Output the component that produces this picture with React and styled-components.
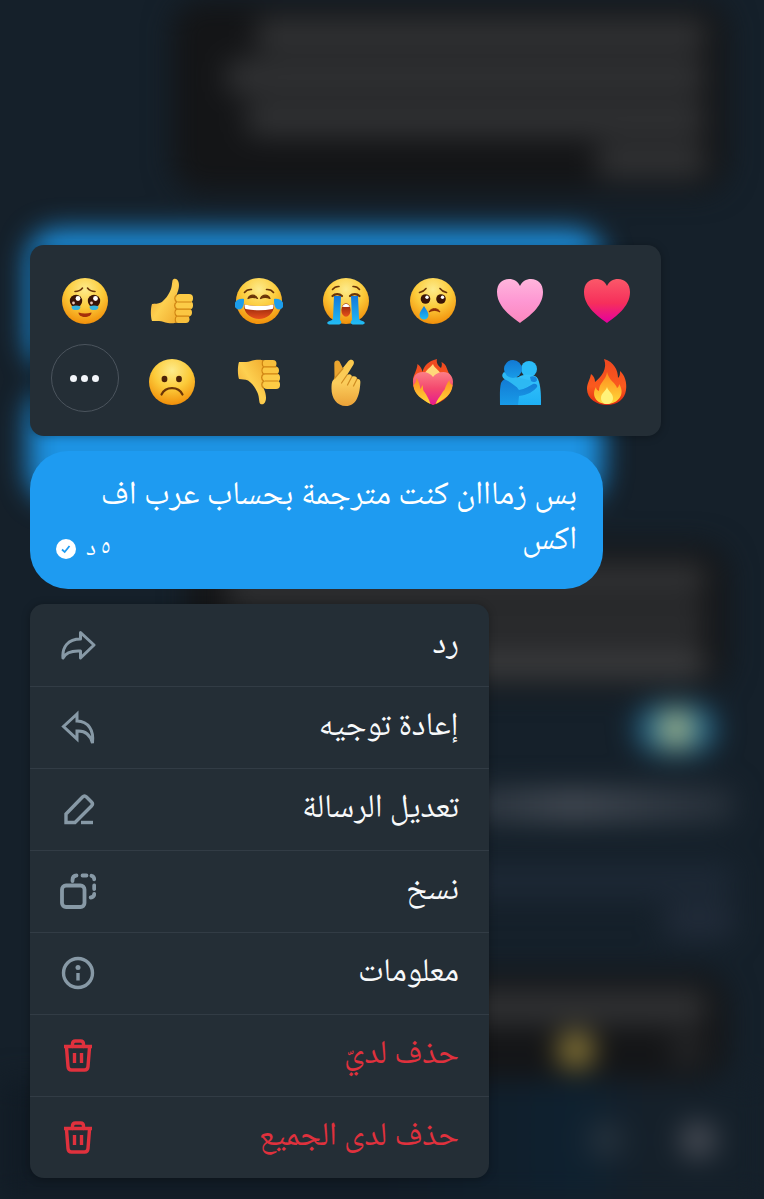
import React from 'react';
import styled, { createGlobalStyle, css } from 'styled-components';

const GlobalStyle = createGlobalStyle`
  * {
    box-sizing: border-box;
  }
  body {
    margin: 0;
    background: #15202a;
    font-family: "Noto Naskh Arabic UI", "Noto Naskh Arabic", "Noto Sans Arabic", "Noto Sans", "DejaVu Sans", sans-serif;
  }
  button {
    margin: 0;
    padding: 0;
    border: none;
    background: none;
    color: inherit;
    font: inherit;
    cursor: pointer;
  }
`;

const Screen = styled.main`
  position: relative;
  display: flex;
  flex-direction: column;
  align-items: flex-end;
  gap: 15px;
  min-height: 100vh;
  padding: 245px 103px 20px 30px;
  overflow: hidden;
`;

/* blurred conversation behind the overlay */
const Backdrop = styled.div`
  position: absolute;
  inset: 0;
  display: flex;
  flex-direction: column;
  align-items: flex-start;
  filter: blur(14px);
  pointer-events: none;
`;

const GhostBubble = styled.div`
  display: flex;
  flex-direction: column;
  gap: 8px;
  flex: none;
  width: ${(p) => p.$width}px;
  height: ${(p) => p.$height}px;
  margin: ${(p) => p.$top || 0}px 36px 0;
  padding: 18px 22px;
  border-radius: 30px;
  background: #141517;
  ${(p) => p.$own && css`
    align-self: flex-end;
    margin-left: 28px;
    background: #1d93e3;
  `}
`;

const GhostLine = styled.div`
  flex: none;
  width: ${(p) => p.$width}px;
  height: 34px;
  margin: ${(p) => p.$top || 0}px ${(p) => p.$side || 0}px 0;
  border-radius: 10px;
  background: ${(p) => p.$color || '#313234'};
`;

const GhostReaction = styled.div`
  display: flex;
  flex: none;
  align-items: center;
  justify-content: center;
  width: 80px;
  height: 50px;
  margin: 14px 48px 0;
  border-radius: 25px;
  background: #24688c;
`;

const GhostDot = styled.div`
  width: 36px;
  height: 36px;
  border-radius: 50%;
  background: ${(p) => p.$color};
`;

const GhostRow = styled.div`
  display: flex;
  gap: ${(p) => p.$gap}px;
`;

const GhostComposer = styled.div`
  display: flex;
  flex: 1;
  align-items: center;
  align-self: stretch;
  gap: 56px;
  padding: 0 48px;
  background: linear-gradient(to left, #15202a 16%, #0f2130 24%, #111b25 50%);
`;

const panel = css`
  position: relative;
  width: 100%;
  border-radius: 14px;
  background: #242e36;
  box-shadow: 0 1px 8px rgba(0, 0, 0, 0.3);
`;

const Reactions = styled.div`
  ${panel}
  display: grid;
  grid-template-columns: repeat(7, 1fr);
  grid-auto-rows: 81px;
  padding: 15px 11px 14px;
`;

const Reaction = styled.button`
  display: flex;
  align-items: center;
  justify-content: center;
  svg {
    width: 48px;
    height: 48px;
  }
`;

const MoreButton = styled.button`
  display: flex;
  align-items: center;
  justify-content: center;
  justify-self: center;
  gap: 4px;
  width: 68px;
  height: 68px;
  margin-top: 3px;
  border: 1px solid #4b545d;
  border-radius: 50%;
`;

const MoreDot = styled.span`
  width: 7px;
  height: 7px;
  border-radius: 50%;
  background: #f3f6fa;
`;

const Bubble = styled.article`
  position: relative;
  display: flow-root;
  width: 100%;
  max-width: 573px;
  min-height: 138px;
  padding: 22px 26px 26px;
  border-radius: 38px;
  background: #1e9bf1;
  color: #fff;
  font-size: 33px;
  line-height: 45px;
`;

const Message = styled.p`
  display: inline;
  margin: 0;
`;

/* floats up beside the last line when there is room for it */
const Meta = styled.div`
  display: flex;
  float: left;
  align-items: center;
  gap: 10px;
  margin-top: 17px;
  font-size: 24px;
  line-height: 28px;
`;

const Menu = styled.div`
  ${panel}
  max-width: 459px;
  overflow: hidden;
`;

const MenuItem = styled.button`
  display: flex;
  align-items: center;
  justify-content: space-between;
  width: 100%;
  height: 82px;
  padding: 0 30px;
  color: ${(p) => (p.$danger ? '#e0313d' : '#f7f9fa')};
  font-size: 33px;
  line-height: 44px;
  & + & {
    padding-bottom: 2px;
    border-top: 1px solid #323c45;
  }
  svg {
    width: 36px;
    height: 36px;
    color: ${(p) => (p.$danger ? '#e0313d' : '#8799a6')};
  }
`;

const Defs = () => (
  <svg width="0" height="0" style={{ position: 'absolute' }} aria-hidden="true">
    <defs>
      <radialGradient id="face" cx="50%" cy="25%" r="78%">
        <stop offset="0" stopColor="#fdeb8c" />
        <stop offset="0.5" stopColor="#fccb3a" />
        <stop offset="1" stopColor="#f08a06" />
      </radialGradient>
      <linearGradient id="skin" x1="0" y1="0" x2="1" y2="1">
        <stop offset="0" stopColor="#ef9f2c" />
        <stop offset="0.5" stopColor="#fdd050" />
        <stop offset="1" stopColor="#f0a92c" />
      </linearGradient>
      <linearGradient id="palm" x1="0" y1="0" x2="0" y2="1">
        <stop offset="0" stopColor="#fbc94c" />
        <stop offset="0.5" stopColor="#fbcd5c" />
        <stop offset="1" stopColor="#eba238" />
      </linearGradient>
      <linearGradient id="tear" x1="0" y1="0" x2="0" y2="1">
        <stop offset="0" stopColor="#1378db" />
        <stop offset="1" stopColor="#22bdf5" />
      </linearGradient>
      <linearGradient id="mouth" x1="0" y1="0" x2="0" y2="1">
        <stop offset="0" stopColor="#8a2108" />
        <stop offset="1" stopColor="#e8501c" />
      </linearGradient>
      <linearGradient id="pink" x1="0" y1="0" x2="0" y2="1">
        <stop offset="0" stopColor="#ffb5dc" />
        <stop offset="0.5" stopColor="#fe98d3" />
        <stop offset="1" stopColor="#fb87bd" />
      </linearGradient>
      <linearGradient id="red" x1="0" y1="0" x2="0" y2="1">
        <stop offset="0" stopColor="#fb5869" />
        <stop offset="0.55" stopColor="#f62f5b" />
        <stop offset="1" stopColor="#e400a0" />
      </linearGradient>
      <linearGradient id="burning" x1="0" y1="0" x2="0" y2="1">
        <stop offset="0" stopColor="#fb7f86" />
        <stop offset="0.5" stopColor="#f4486f" />
        <stop offset="1" stopColor="#e51a90" />
      </linearGradient>
      <linearGradient id="flame" x1="0" y1="0" x2="0" y2="1">
        <stop offset="0" stopColor="#ee4720" />
        <stop offset="0.6" stopColor="#fb5a1e" />
        <stop offset="1" stopColor="#e02a12" />
      </linearGradient>
      <linearGradient id="glow" x1="0" y1="0" x2="0" y2="1">
        <stop offset="0" stopColor="#ff8a1c" />
        <stop offset="1" stopColor="#ffd93b" />
      </linearGradient>
      <linearGradient id="hugA" x1="0" y1="0" x2="0" y2="1">
        <stop offset="0" stopColor="#1279d3" />
        <stop offset="1" stopColor="#189be8" />
      </linearGradient>
      <linearGradient id="hugB" x1="0" y1="0" x2="0" y2="1">
        <stop offset="0" stopColor="#35c3fb" />
        <stop offset="1" stopColor="#1eb0f5" />
      </linearGradient>
    </defs>
  </svg>
);

const Face = ({ children }) => (
  <svg viewBox="0 0 48 48">
    <circle cx="24" cy="24" r="23" fill="url(#face)" />
    {children}
  </svg>
);

const brow = { fill: 'none', stroke: '#6a3407', strokeWidth: 1.6, strokeLinecap: 'round' };

const HoldingTears = () => (
  <Face>
    <path d="M14 14.500c3 0 5.500-1 7.500-3.500M34 14.500c-3 0-5.500-1-7.500-3.500" {...brow} />
    <circle cx="15" cy="24" r="6.200" fill="#3a1507" />
    <circle cx="33" cy="24" r="6.200" fill="#3a1507" />
    <path d="M10.500 29.500q4.500-2 9 0c0 3-2.500 3.500-4.500 3.500s-4.500-.5-4.500-3.500zM28.500 29.500q4.500-2 9 0c0 3-2.500 3.500-4.500 3.500s-4.500-.5-4.500-3.500z" fill="#35b4dd" />
    <circle cx="17" cy="21.500" r="2.400" fill="#fff" />
    <circle cx="34.500" cy="21.500" r="2.400" fill="#fff" />
    <circle cx="12.500" cy="26" r="1.400" fill="#e9c8b9" />
    <circle cx="30.500" cy="26" r="1.400" fill="#e9c8b9" />
    <path d="M17.500 35.500q6.500 2 13 0c0 6-13 6-13 0z" fill="#a52f0a" />
  </Face>
);

const Joy = () => (
  <Face>
    <path d="M9.500 15.500c1.500-2.200 4-3.200 7-3M38.500 15.500c-1.500-2.200-4-3.200-7-3" {...brow} />
    <path d="M13 21.500c2-4.500 7.500-4.500 9.500 0-3-1.500-6.500-1.500-9.500 0zM25.500 21.500c2-4.500 7.500-4.500 9.500 0-3-1.500-6.500-1.500-9.500 0z" fill="#6a3407" stroke="#6a3407" strokeWidth="1.200" strokeLinejoin="round" />
    <path d="M9 27.500q15 3 30 0c.5 9-7 14.500-15 14.500S8.500 36.500 9 27.500z" fill="url(#mouth)" />
    <path d="M9.500 27.500q14.500 3 29 0c.3 2-.2 3.500-1 4.500q-13.500 2.500-27 0c-.8-1-1.200-2.500-1-4.500z" fill="#fff" />
    <path d="M9 22c-5-1-9.500 2-9.500 6 0 4.500 6 6 8 2.500C9 28 9 25 9 22zM39 22c5-1 9.500 2 9.500 6 0 4.500-6 6-8 2.500C39 28 39 25 39 22z" fill="#1c9deb" />
  </Face>
);

const Sob = () => (
  <Face>
    <path d="M10.500 12.500c1.500-2 4-3.200 6.500-3M37.500 12.500c-1.500-2-4-3.200-6.500-3" {...brow} />
    <path d="M10.500 19c2.500-2.500 7-2.500 9.500 0M28 19c2.500-2.500 7-2.500 9.500 0" {...brow} strokeWidth="2.200" />
    <ellipse cx="24" cy="33" rx="4.600" ry="6.800" fill="url(#mouth)" />
    <path d="M20 29.500q4-5.500 8 0-4 1.200-8 0z" fill="#fff" />
    <path d="M12 19h7L18 43c2 2 2 4.500-2 4.500H8c-3 0-4-2.500-.5-3.500 2-.5 3.500-1 3.500-3zM36 19h-7L30 43c-2 2-2 4.500 2 4.500H40c3 0 4-2.500.5-3.500-2-.5-3.500-1-3.500-3z" fill="url(#tear)" />
  </Face>
);

const Cry = () => (
  <Face>
    <path d="M10.500 15.500c2.500-.5 5-2 6.500-4M37.500 15.500c-2.500-.5-5-2-6.500-4" {...brow} />
    <circle cx="16.500" cy="22" r="4.800" fill="#3a1507" />
    <circle cx="32" cy="22" r="4.800" fill="#3a1507" />
    <circle cx="18" cy="20.200" r="1.700" fill="#fff" />
    <circle cx="33.500" cy="20.200" r="1.700" fill="#fff" />
    <path d="M20 35c2-4.500 9-4.500 11 0-3.500-2-7.500-2-11 0z" fill="#8a2c07" stroke="#8a2c07" strokeLinejoin="round" />
    <path d="M15 29c2.500 4 4.500 6 4.500 9a4.500 4.500 0 0 1-9 0c0-3 2-5 4.500-9z" fill="url(#tear)" />
  </Face>
);

const Frown = () => (
  <Face>
    <ellipse cx="16.500" cy="21" rx="2.900" ry="3.300" fill="#4b2107" />
    <ellipse cx="31" cy="21" rx="2.900" ry="3.300" fill="#4b2107" />
    <path d="M13.500 36.500c4-8.500 17-8.500 21 0" {...brow} strokeWidth="2.200" />
  </Face>
);

const Thumb = ({ down }) => (
  <svg viewBox="0 0 48 48">
    <g transform={down ? 'matrix(1 0 0 -1 0 48)' : undefined}>
      <path d="M4 27c3-.5 6 0 9-1.500 4-2.500 8-8 10-13.500 1-3 1-6 1.500-8.500.5-2 3-2.500 4.500-1 3 3 2.500 9-.5 15.500L30 44c-2 2.500-6 2.500-10 2-4-.4-6-2-9-2H4c-1.500-4.500-1.500-12.500 0-17z" fill="url(#skin)" />
      <rect x="28" y="17" width="17" height="8.500" rx="4" fill="#fdcb45" />
      <rect x="28" y="24" width="17" height="8.500" rx="4" fill="#fccb47" />
      <rect x="27.500" y="31.500" width="16.500" height="8" rx="4" fill="#fbc642" />
      <rect x="26.500" y="38.500" width="15" height="7.500" rx="3.700" fill="#f8bf3c" />
      <path d="M30 25h13M29.500 32.200h13M29 39.200h12M28.500 18c-2.500 2-2 5 0 7-2.500 2-2.500 5 0 7-2 2-2 5 0 7-1.500 2-1.500 4.500-.5 6.500" fill="none" stroke="#cf8412" strokeWidth="1.200" strokeLinecap="round" />
    </g>
  </svg>
);

const HEART = 'M24 46C16 40 1 30 1 15 1 7 6 2 13 2c5 0 9 2.500 11 7 2-4.500 6-7 11-7 7 0 12 5 12 13 0 15-15 25-23 31z';

const Heart = ({ fill }) => (
  <svg viewBox="0 0 48 48">
    <path d={HEART} fill={`url(#${fill})`} />
  </svg>
);

const CrossedFingers = () => (
  <svg viewBox="0 0 48 48">
    <path d="M12.500 20 12.300 5.500c0-3.500 4.500-4 5.700-1l4.500 9z" fill="#eba52f" />
    <path d="M10.500 23 26 3.500c2.500-3.500 7.500-1 5.500 3L25 17c2.500-1.500 5-.5 4.800 1.800 3-1.300 5.400 0 5.200 2.200 2.800-.5 3.800 1.500 3.300 4.500C37.500 38 34 48 24 48c-9.500 0-14.500-8-14.500-17.500 0-3 0-5 1-7.500z" fill="url(#palm)" />
    <path d="M25 17 19.500 25M29.800 18.800 25.500 27M35 21l-3.500 7M12.500 20.500l8.500-10" fill="none" stroke="#cf8c22" strokeWidth="1.200" strokeLinecap="round" />
  </svg>
);

const HeartOnFire = () => (
  <svg viewBox="0 0 48 48">
    <path d="M24 47C13 42 3 34 4 22c.5-6 4-9 4.500-16 3 2 4.500 5 5 8C15 8 19 3 28 1c-1 4 1 7 4 9 1-2 1-4 .5-6 6 3 5 8 8 12 8 14-2 27-16.500 31z" fill="url(#flame)" />
    <path d="M24 6c1 4 8 7 9 13H15c0-6 6-9 9-13z" fill="#ffd77a" />
    <path d="M24 47C15 42 4 35 4 24c0-6 4-10 9.500-10 5 0 8.500 2 10.500 5 2-3 5.500-5 10.500-5 5.500 0 9.500 4 9.500 10 0 11-11 18-20 23z" fill="url(#burning)" />
    <path d="M4.500 27c0 9 9 15 17 19-2-6-4-9-6-12-2-2-1-4-2-7-1 1-1 3-2 4-1-6-2-8-4-11 0 3-1 5-3 7zM43.500 27c0 9-9 15-17 19 2-5 4-7 6-10 2-4 3-3 4-7 1-2 2-5 4-7 0 3 1 4 3 5z" fill="url(#glow)" />
  </svg>
);

const Hug = () => (
  <svg viewBox="0 0 48 48">
    <circle cx="33" cy="11" r="8" fill="#2bbcf8" />
    <path d="M20 21c4-5 19-6 22 0 3 7 3 17 3 26H20z" fill="url(#hugB)" />
    <path d="M5 25c2-4 6-6 11-5 4 3 4 9 7 12 6-1 10-4 14-6 3-1 5 1 4 3-3 4-9 8-18 9l-1 9H4c0-8-.5-16 1-22z" fill="url(#hugA)" />
    <path d="M8 14c-3 3-2 6 2 8 5 2 8 6 14 9 6-1 10-4 12-8L20 19z" fill="#2db9f3" />
    <circle cx="17" cy="11" r="9" fill="url(#hugA)" />
    <path d="M34 19c3-2 7 0 7 3 0 2-4 3-6 1z" fill="#1686dd" />
  </svg>
);

const Fire = () => (
  <svg viewBox="0 0 48 48">
    <path d="M21 1c10 3 14 11 14 19 2-2 2-4 2-7 5 4 7 12 6 19-1 9-9 15-19 15S4 41 4 31c0-6 3-9 4-15 3 2 4 5 4 8 6-5 13-13 9-23z" fill="url(#flame)" />
    <path d="M24 14c2 9 9 11 10 16 2-1 2-3 2-4 7 10-1 20-12 20S8 37 13 29c0 2 1 3 3 4 0-9 7-10 8-19z" fill="url(#glow)" />
    <path d="M24 29c1 4 6 6 6 11 0 4-3 6-6 6s-6-2-6-6c0-5 5-7 6-11z" fill="#fff27a" />
  </svg>
);

const line = { fill: 'none', stroke: 'currentColor', strokeWidth: 3.4, strokeLinejoin: 'round', strokeLinecap: 'round' };

const ReplyIcon = () => (
  <svg viewBox="0 0 36 36" {...line} strokeWidth="3">
    <path d="M20.500 5.500 34 18 20.500 31v-7C12 23.500 6 25 3 31 2 20 8 12 20.500 12z" />
  </svg>
);

const ForwardIcon = () => (
  <svg viewBox="0 0 36 36" {...line} strokeWidth="3" strokeLinejoin="miter" strokeLinecap="butt">
    <path d="M17 5 3.500 17.500 17 30v-8c7-.5 13 3 15.500 12C34 21 28.500 12.500 17 12z" />
  </svg>
);

const EditIcon = () => (
  <svg viewBox="0 0 36 36" {...line} strokeLinecap="butt">
    <path d="M6 31.500V23L22.500 6q2-2 4 0l5 5q2 2 0 4L15 31.500z" strokeLinejoin="miter" />
    <path d="M21 31.500h12" />
  </svg>
);

const CopyIcon = () => (
  <svg viewBox="0 0 36 36" {...line} strokeWidth="3.800">
    <rect x="2" y="12.500" width="22.500" height="21.500" rx="4" />
    <path d="M12.500 8V7q0-4.500 4-4.500M22.500 2.500h4M31.500 2.800q2.700.7 2.700 3.500M34.200 12.500v3.500M34.200 21q0 3-3.500 3.500" />
  </svg>
);

const InfoIcon = () => (
  <svg viewBox="0 0 36 36" {...line}>
    <circle cx="18" cy="18" r="14.500" />
    <circle cx="18" cy="12.500" r="2.500" fill="currentColor" stroke="none" />
    <path d="M18 18v7.500" strokeLinecap="butt" />
  </svg>
);

const TrashIcon = () => (
  <svg viewBox="0 0 36 36" {...line}>
    <path d="M4 9.500h28" strokeLinecap="butt" />
    <path d="M12.500 9.500V7q0-3 3-3h5q3 0 3 3v2.500M6.500 10.500l1.500 19q.3 3.500 3.500 3.500h13q3.200 0 3.500-3.500l1.500-19" />
    <path d="M14.500 16v10M21.500 16v10" strokeLinecap="butt" />
  </svg>
);

const SentIcon = () => (
  <svg width="20" height="20" viewBox="0 0 20 20">
    <circle cx="10" cy="10" r="10" fill="#fff" />
    <path d="m6 10.500 2.700 2.500L13.500 7" fill="none" stroke="#1e9bf1" strokeWidth="1.800" />
  </svg>
);

const reactions = [
  { name: 'قلب أحمر', icon: <Heart fill="red" /> },
  { name: 'قلب وردي', icon: <Heart fill="pink" /> },
  { name: 'حزين', icon: <Cry /> },
  { name: 'بكاء', icon: <Sob /> },
  { name: 'ضحك', icon: <Joy /> },
  { name: 'إعجاب', icon: <Thumb /> },
  { name: 'تأثر', icon: <HoldingTears /> },
  { name: 'نار', icon: <Fire /> },
  { name: 'عناق', icon: <Hug /> },
  { name: 'قلب مشتعل', icon: <HeartOnFire /> },
  { name: 'حب', icon: <CrossedFingers /> },
  { name: 'عدم إعجاب', icon: <Thumb down /> },
  { name: 'عبوس', icon: <Frown /> },
];

const actions = [
  { label: 'رد', icon: <ReplyIcon /> },
  { label: 'إعادة توجيه', icon: <ForwardIcon /> },
  { label: 'تعديل الرسالة', icon: <EditIcon /> },
  { label: 'نسخ', icon: <CopyIcon /> },
  { label: 'معلومات', icon: <InfoIcon /> },
  { label: 'حذف لديّ', icon: <TrashIcon />, danger: true },
  { label: 'حذف لدى الجميع', icon: <TrashIcon />, danger: true },
];

function Conversation() {
  return (
    <Backdrop aria-hidden="true">
      <GhostBubble $width={556} $height={192}>
        <GhostLine $width={450} />
        <GhostLine $width={480} />
        <GhostLine $width={460} />
        <GhostLine $width={110} />
      </GhostBubble>
      <GhostBubble $own $top={38} $width={575} $height={140} />
      <GhostBubble $own $top={18} $width={575} $height={114} />
      <GhostBubble $top={42} $width={540} $height={146}>
        <GhostLine $width={480} />
        <GhostLine $width={480} $color="#2c2d2f" />
        <GhostLine $width={480} $color="#3a3b3d" />
      </GhostBubble>
      <GhostReaction>
        <GhostDot $color="#a5b486" />
      </GhostReaction>
      <GhostLine $width={270} $top={34} $side={30} $color="linear-gradient(to left, #262f39, #434a53 60%, #2b343e)" />
      <GhostLine $width={270} $top={42} $side={30} $color="#1d2835" />
      <GhostLine $width={70} $top={6} $side={30} $color="#212b39" />
      <GhostBubble $top={34} $width={520} $height={108}>
        <GhostLine $width={480} />
        <GhostRow $gap={76}>
          <GhostDot $color="#242527" />
          <GhostDot $color="#93803a" />
        </GhostRow>
      </GhostBubble>
      <GhostComposer>
        <GhostDot $color="#4a4e57" />
        <GhostDot $color="#26323d" />
      </GhostComposer>
    </Backdrop>
  );
}

function App() {
  return (
    <>
      <GlobalStyle />
      <Defs />
      <Screen dir="rtl" lang="ar">
        <Conversation />
        <Reactions>
          {reactions.map((r) => (
            <Reaction key={r.name} type="button" aria-label={r.name}>{r.icon}</Reaction>
          ))}
          <MoreButton type="button" aria-label="المزيد">
            <MoreDot />
            <MoreDot />
            <MoreDot />
          </MoreButton>
        </Reactions>
        <Bubble>
          <Message>بس زمااان كنت مترجمة بحساب عرب اف اكس</Message>
          <Meta>
            <span>٥ د</span>
            <SentIcon />
          </Meta>
        </Bubble>
        <Menu>
          {actions.map((a) => (
            <MenuItem key={a.label} type="button" $danger={a.danger}>
              <span>{a.label}</span>
              {a.icon}
            </MenuItem>
          ))}
        </Menu>
      </Screen>
    </>
  );
}

export default App;
